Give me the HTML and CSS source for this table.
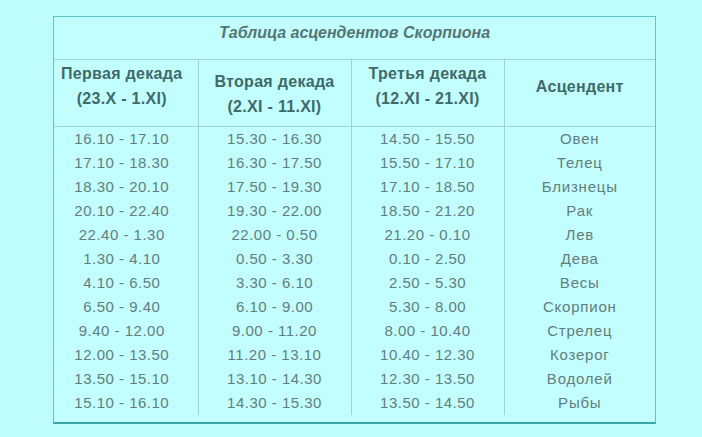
FILE: index.html
```html
<!DOCTYPE html>
<html lang="ru">
<head>
<meta charset="utf-8">
<link rel="stylesheet" href="styles.css">
</head>
<body>
<div class="page">
  <div class="box">
    <table class="asc">
      <colgroup>
        <col class="c1"><col class="c2"><col class="c3"><col class="c4">
      </colgroup>
      <thead>
        <tr><th colspan="4" class="title">Таблица асцендентов Скорпиона</th></tr>
        <tr class="heads">
          <th class="first raised">Первая декада<br>(23.X - 1.XI)</th>
          <th class="mid">Вторая декада<br>(2.XI - 11.XI)</th>
          <th class="raised">Третья декада<br>(12.XI - 21.XI)</th>
          <th class="raised">Асцендент</th>
        </tr>
      </thead>
      <tbody>
        <tr><td class="first">16.10 - 17.10</td><td>15.30 - 16.30</td><td>14.50 - 15.50</td><td class="sign">Овен</td></tr>
        <tr><td class="first">17.10 - 18.30</td><td>16.30 - 17.50</td><td>15.50 - 17.10</td><td class="sign">Телец</td></tr>
        <tr><td class="first">18.30 - 20.10</td><td>17.50 - 19.30</td><td>17.10 - 18.50</td><td class="sign">Близнецы</td></tr>
        <tr><td class="first">20.10 - 22.40</td><td>19.30 - 22.00</td><td>18.50 - 21.20</td><td class="sign">Рак</td></tr>
        <tr><td class="first">22.40 - 1.30</td><td>22.00 - 0.50</td><td>21.20 - 0.10</td><td class="sign">Лев</td></tr>
        <tr><td class="first">1.30 - 4.10</td><td>0.50 - 3.30</td><td>0.10 - 2.50</td><td class="sign">Дева</td></tr>
        <tr><td class="first">4.10 - 6.50</td><td>3.30 - 6.10</td><td>2.50 - 5.30</td><td class="sign">Весы</td></tr>
        <tr><td class="first">6.50 - 9.40</td><td>6.10 - 9.00</td><td>5.30 - 8.00</td><td class="sign">Скорпион</td></tr>
        <tr><td class="first">9.40 - 12.00</td><td>9.00 - 11.20</td><td>8.00 - 10.40</td><td class="sign">Стрелец</td></tr>
        <tr><td class="first">12.00 - 13.50</td><td>11.20 - 13.10</td><td>10.40 - 12.30</td><td class="sign">Козерог</td></tr>
        <tr><td class="first">13.50 - 15.10</td><td>13.10 - 14.30</td><td>12.30 - 13.50</td><td class="sign">Водолей</td></tr>
        <tr><td class="first">15.10 - 16.10</td><td>14.30 - 15.30</td><td>13.50 - 14.50</td><td class="sign">Рыбы</td></tr>
      </tbody>
    </table>
  </div>
</div>
</body>
</html>
```
FILE: styles.css
```css
html, body {
  margin: 0;
  padding: 0;
  background: #bffcfc;
}
.page {
  padding: 16px 0 0 53px;
  font-family: "Liberation Sans", Arial, sans-serif;
}
.box {
  width: 601px;
  border: 1px solid #5cc6c6;
  border-bottom: 2px solid #3aa5a5;
  background: #c3fefe;
  padding-bottom: 7px;
}
.asc {
  width: 601px;
  border-collapse: collapse;
  table-layout: fixed;
}
.c1 { width: 144px; }
.c2 { width: 153px; }
.c3 { width: 153px; }
.c4 { width: 151px; }

.title {
  height: 31px;
  padding: 0 0 11px 0;
  font-size: 16px;
  font-style: italic;
  font-weight: bold;
  color: #567575;
  text-align: center;
  vertical-align: middle;
  border-bottom: 1px solid #9fd2d2;
}
.heads th {
  height: 52px;
  padding: 0;
  font-size: 16px;
  font-weight: bold;
  letter-spacing: 0.3px;
  line-height: 25px;
  color: #3e6a6a;
  text-align: center;
  vertical-align: middle;
  border-bottom: 1px solid #9fd2d2;
}
.heads th.raised { padding-bottom: 14px; }
.heads th.mid { padding-top: 1px; }
.heads th + th { border-left: 1px solid #9fd2d2; }

tbody td {
  height: 24px;
  padding: 0;
  font-size: 15px;
  letter-spacing: 0.5px;
  line-height: 24px;
  color: #627d7d;
  text-align: center;
  vertical-align: middle;
}
tbody td + td { border-left: 1px solid #9fd2d2; }
.heads th.first, tbody td.first { padding-right: 8px; }
tbody td.sign { letter-spacing: 0.8px; }
```
